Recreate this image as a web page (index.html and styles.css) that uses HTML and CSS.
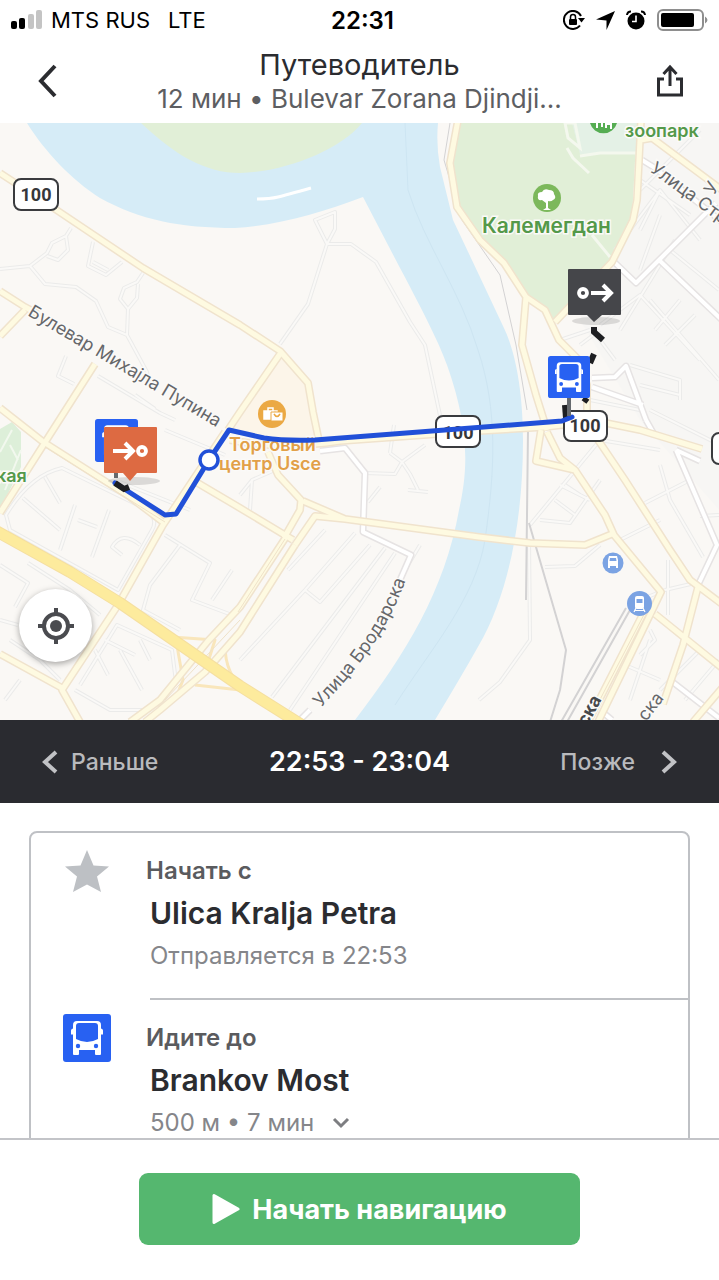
FILE: index.html
```html
<!DOCTYPE html>
<html lang="ru">
<head>
    <meta charset="UTF-8">
    <meta name="viewport" content="width=device-width, initial-scale=1.0">
    <title>Путеводитель</title>
    <link rel="stylesheet" href="styles.css">
</head>
<body>
    <div class="app">
        <div class="status">
            <div class="status-left">
                <svg width="32" height="20" viewBox="0 0 32 20">
                    <rect x="0" y="11" width="6" height="8" rx="2"/>
                    <rect x="8" y="8" width="6" height="11" rx="2"/>
                    <rect x="17" y="4" width="6" height="15" rx="2" fill="#c4c4c4"/>
                    <rect x="25" y="0" width="6" height="19" rx="2" fill="#c4c4c4"/>
                </svg>
                <span>MTS RUS</span>
                <span class="status-net">LTE</span>
            </div>
            <div class="status-time">22:31</div>
            <div class="status-right">
                <svg width="22" height="20" viewBox="0 0 22 20">
                    <path d="M18 6A9 9 0 1 0 17 15.500M19 10V8" fill="none" stroke="#000" stroke-width="2"/>
                    <path d="M15 8h7l-3.500 4.500z"/>
                    <rect x="6" y="9" width="8" height="6" rx="1"/>
                    <path d="M7.500 9V7a2.500 2.500 0 0 1 5 0v2" fill="none" stroke="#000" stroke-width="1.500"/>
                </svg>
                <svg width="19" height="19" viewBox="0 0 19 19"><path d="M19 0L10.500 19V9.500L0 8.500z"/></svg>
                <svg width="20" height="20" viewBox="0 0 20 20">
                    <circle cx="10" cy="11" r="8.500"/>
                    <path d="M1 5A4 4 0 0 1 5 1.500M19 5a4 4 0 0 0-4-3.500" fill="none" stroke="#000" stroke-width="2"/>
                    <path d="M10 5.500V11.500H6" fill="none" stroke="#fff" stroke-width="1.600"/>
                </svg>
                <svg width="51" height="22" viewBox="0 0 51 22">
                    <rect x="1" y="1" width="45" height="20" rx="5" fill="none" stroke="#8e8e8e" stroke-width="2"/>
                    <rect x="4" y="4" width="33" height="14" rx="2"/>
                    <path d="M48 7.500q5 3.500 0 7z" fill="#8e8e8e"/>
                </svg>
            </div>
        </div>

        <header class="header">
            <button class="icon-btn" aria-label="Назад">
                <svg width="20" height="34" viewBox="0 0 20 34"><path d="M18 2L4 17l14 15" fill="none" stroke="#2b2c30" stroke-width="4"/></svg>
            </button>
            <div class="titles">
                <h1>Путеводитель</h1>
                <p>12 мин • Bulevar Zorana Djindji...</p>
            </div>
            <button class="icon-btn" aria-label="Поделиться">
                <svg width="28" height="34" viewBox="0 0 28 34" fill="none" stroke="#2b2c30" stroke-width="3">
                    <path d="M8 15H2.500v16h23V15H20"/>
                    <path d="M14 22V4M7.500 10L14 3l6.500 7"/>
                </svg>
            </button>
        </header>

        <div class="map">
            <svg class="map-canvas" viewBox="0 123 719 597">
                <defs>
                    <symbol id="bus" viewBox="0 0 48 48">
                        <rect width="48" height="48" rx="3" fill="#2861f2"/>
                        <path d="M10 40V11q0-4 4-4h20q4 0 4 4v29q0 1-1 1h-4q-1 0-1-1v-4H16v4q0 1-1 1h-4q-1 0-1-1z" fill="#fff"/>
                        <path d="M13 12q0-3 3-3h16q3 0 3 3v13q-11 6-22 0z" fill="#2861f2"/>
                        <path d="M10 14.500q-2 .5-2 2v4h2M38 14.500q2 .5 2 2v4h-2" fill="#fff"/>
                        <circle cx="15" cy="32" r="2.200" fill="#2861f2"/>
                        <circle cx="33" cy="32" r="2.200" fill="#2861f2"/>
                    </symbol>
                    <!-- дороги рисуются дважды: контур и заливка -->
                    <g id="roads">
                        <path d="M0 173L58 211 143 268 240 325 280 351 308 383 313 412 319 441"/>
                        <path d="M0 291L25 307 38 314M25 310L0 336M280 354L240 412 228 430M225 432L163 525 118 605 62 690 80 722"/>
                        <path d="M95 364L58 422 0 513M0 408L42 441 130 497 163 522M62 688L0 654M196 482L240 508 293 540"/>
                        <path d="M284 538L300 510 301 500 278 475 268 452M303 501L345 519 479 537 530 543 585 545 612 534M295 545L315 516 345 519"/>
                        <path d="M286 537L240 607 208 641 160 700 130 722M295 545L240 632 205 672 160 710 145 722"/>
                        <path d="M230 440Q280 450 340 441L479 431 545 427 596 421 640 430 702 449"/>
                        <path d="M458 120L450 163 457 207 480 240 504 263 526 297 545 310 559 340 579 360 587 385 587 420M526 297L522 345 536 395 547 430"/>
                        <path d="M641 120L637 200 633 220 612 262 555 322M652 138L722 190M641 140L652 138"/>
                        <path d="M541 430L536 461 575 470M547 432L560 458 575 470 605 515 614 535 661 592 650 615 598 722M590 428L625 480 670 550 690 580 722 604"/>
                        <path d="M655 614L722 668M698 587L683 645 663 704M722 688L693 722M650 600L588 722"/>
                    </g>
                    <g id="lanes">
                        <path d="M320 451L345 448 365 473 363 532 411 555 400 580M310 710L298 722"/>
                        <path d="M676 450L717 545 699 583M646 420L626 366 615 377 592 378M592 387L643 405M646 420L655 436M700 461L676 450"/>
                        <path d="M612 260L636 283 659 260 716 203M659 260L722 320M642 160L655 168 722 222M670 680L719 718M600 710L612 720"/>
                    </g>
                    <g id="paths">
                        <path d="M0 269L30 266 47 253 52 243 66 236 71 228M66 236L68 250 58 260 47 256M30 266L45 284 76 287 96 301 108 327 127 335 147 372 148 380M127 335L128 309 120 299 124 288 137 282 143 273M128 309L137 298 138 284M93 242L88 266 106 275 122 262M93 262L108 270"/>
                        <path d="M66 356L58 376 74 384M98 376L160 413 175 420M135 395L155 409M327 244L315 220 335 212 335 229 327 244 351 244 376 262 410 322 425 345 441 420M327 244L308 304 280 344"/>
                        <path d="M6 515Q30 475 62 468L148 510Q158 520 152 530L118 590 10 530zM23 498L60 530M45 477L60 503M75 505L60 550M109 510L92 557M97 527L78 520M140 545q-18-15-28 2l10 8M120 482L190 510M165 430L225 455"/>
                        <path d="M165 535L210 563 192 600 232 615M180 545L150 585 143 610 180 630M232 570L212 600M0 565L28 583 15 607M28 563L70 590 100 615M0 620L18 625M10 640L40 660 60 680M5 700L20 680M80 685L117 625 172 650 176 682 150 710 110 710 75 690M95 650L108 675M105 640L135 655M120 650L142 690M140 640L150 660"/>
                        <path d="M240 495L252 480 275 470M252 480L250 510M325 530L288 570M355 533L305 590 240 660M305 590L320 602 370 545M385 548L272 697M395 553L290 710M365 473L395 474 402 462 390 453M402 462L410 474 418 490M402 462L425 445M368 502L380 487M420 545L405 570M408 490L428 492M394 425L390 453"/>
                        <path d="M479 700L500 682 530 640 529 540M545 567L575 566 600 545M530 525L600 440 660 450M540 520L570 523 600 480M560 485L590 500M555 500L575 515M565 485L580 495M660 465L670 500 703 557M645 503L690 480M620 540L660 520M665 590L695 583M668 560L668 615M640 655L655 640 650 630M625 665L660 680M650 640L630 700M665 590L640 600M700 650L660 690M719 660L685 700M700 516L719 515M650 410L720 445"/>
                        <path d="M615 250L660 190 700 240M640 190L700 130M660 215L640 270M675 240L620 330M600 325L640 295 700 360M650 300L719 380M655 330L680 300M665 345L695 315M630 365L680 380 680 400M600 340L615 360M590 400L640 410M640 180L690 215M660 170L690 140M670 250L719 290M590 330L560 340M580 345L600 330M640 385L680 395M660 190L640 230"/>
                    </g>
                </defs>

                <rect x="0" y="123" width="719" height="597" fill="#faf8f5"/>
                <path d="M638 120h90v400L640 420 580 320z" fill="#f7f6f4"/>
                <path d="M27 123C45 152 72 180 100 198C140 220 180 228 235 228C280 225 320 213 363 197L400 268C425 315 440 345 447 365C470 430 468 470 459 510C445 590 405 655 355 720H435C450 695 465 670 479 645C505 600 523 530 523 440C523 390 515 350 503 326L479 275L453 220L440 167Q436 145 438 123z" fill="#d6ecf7"/>
                <path d="M405 123L408 190C425 245 460 290 478 350C498 410 495 470 485 540C475 600 430 650 395 705" fill="none" stroke="#cde5f2"/>
                <path d="M141 123C175 155 205 173 240 173C285 172 340 150 362 123z" fill="#e1efd7"/>
                <path d="M257 199Q270 199 278 197T311 188" fill="none" stroke="#fff" stroke-width="3"/>
                <path d="M458 123L452 160 460 205 480 238 506 262 528 296 546 308 554 320 610 262 632 218 637 123z" fill="#e1efd7"/>
                <path d="M572 123L580 154 637 153V123z" fill="#e4f1e6"/>
                <path d="M565 123l3 15 12 10-5-25zM567 148l6 10 16 15M580 156L600 153H638M592 235L610 257" fill="none" stroke="#f4f8ee" stroke-width="3"/>
                <path d="M0 429l12-7 9 10v35L0 510z" fill="#ddefd9"/>
                <path d="M12 430L0 452M10 445L18 460M21 450L5 490" fill="none" stroke="#f2f8ee" stroke-width="2"/>
                <path d="M280 352L308 383 318 438 260 440 226 431z" fill="#fcf5e9"/>

                <use href="#paths" class="path-case"/>
                <use href="#paths" class="path-fill"/>
                <g class="rail">
                    <path d="M450 123L444 160 462 220 500 275 516 345 527 410"/>
                    <path d="M528 430L526 600M529 523L566 650 560 690 550 722" stroke-width="2"/>
                    <path d="M626 608L561 722M630 610L567 722" stroke-width="2"/>
                </g>
                <use href="#lanes" class="lane-case"/>
                <use href="#lanes" class="lane-fill"/>
                <g class="ramp">
                    <path d="M172 637L215 640 208 662M176 640L183 680 175 700M225 645Q225 675 245 690M195 685L240 690"/>
                </g>
                <use href="#roads" class="road-case"/>
                <use href="#roads" class="road-fill"/>
                <path d="M165 522L45 447M285 539L238 612M650 603L592 715M240 620L165 700" fill="none" stroke="#efe2c9" stroke-width="1"/>
                <path class="highway-case" d="M-4 531L70 572 120 603 240 686 302 725"/>
                <path class="highway" d="M-4 531L70 572 120 603 240 686 302 725"/>

                <g class="street">
                    <path id="street1" d="M27 315L228 434" fill="none"/>
                    <path id="street2" d="M321 708C350 675 387 640 411 565" fill="none"/>
                    <text><textPath href="#street1">Булевар Михајла Пупина</textPath></text>
                    <text><textPath href="#street2">Улица Бродарска</textPath></text>
                    <text transform="translate(649 171) rotate(36)">Улица Стр</text>
                    <text transform="translate(714 196) rotate(-60)">У</text>
                    <text transform="translate(646 722) rotate(-52)">ска</text>
                    <text transform="translate(587 727) rotate(-62)" class="street-bold">ска</text>
                </g>

                <g class="place green">
                    <text x="482" y="233">Калемегдан</text>
                    <text x="625" y="137" class="place-small">зоопарк</text>
                    <text x="-4" y="482" class="place-small">кая</text>
                </g>
                <circle cx="547" cy="198" r="14" fill="#7cb85b"/>
                <path d="M546 208v-5l-4-3q-5 1-4-4-1-4 4-4 2-4 7-2 5 0 5 4 3 4-1 6-2 2-5 1v7l3 2h-8z" fill="#fff"/>
                <path d="M590 123a14 14 0 0 0 27 0z" fill="#55ad52"/>
                <path d="M597 123v5M602 123v4M606 128v-4h5v5" stroke="#fff" stroke-width="2" fill="none"/>

                <circle cx="272" cy="414" r="14" fill="#eba944"/>
                <path d="M264 411h13v8h-13zM268 411v-3h5v3" fill="none" stroke="#fff" stroke-width="1.500"/>
                <path d="M264 411h10v8h-10z" fill="#fff"/>
                <path d="M271 412h12v9h-12z" fill="#fff" stroke="#eba944"/>
                <path d="M274 414q3 5 6 0" fill="none" stroke="#eba944" stroke-width="1.500"/>
                <g class="place orange">
                    <text x="229" y="451">Торговый</text>
                    <text x="219" y="470">центр Usce</text>
                </g>

                <g class="shield">
                    <rect x="14" y="179" width="44" height="31" rx="7"/><text x="36" y="201">100</text>
                    <rect x="436" y="416" width="44" height="31" rx="7"/><text x="458" y="439">100</text>
                    <rect x="564" y="411" width="43" height="30" rx="7"/><text x="585" y="432">100</text>
                    <rect x="712" y="433" width="44" height="31" rx="7"/>
                </g>

                <g>
                    <circle cx="613" cy="563" r="10.500" fill="#7ba3e3"/>
                    <path d="M608 560l1-4h8l1 4v8h-2v-2h-6v2h-2z" fill="#fff"/>
                    <path d="M609.500 561l.5-3h6l.5 3z" fill="#7ba3e3"/>
                    <circle cx="639.500" cy="603.500" r="12.500" fill="#7ba3e3"/>
                    <rect x="635" y="596" width="9" height="13" rx="2" fill="#fff"/>
                    <path d="M636.500 599h6v4h-6z" fill="#7ba3e3"/>
                    <path d="M636 608l-2 4M643 608l2 4M635 610.500h9" stroke="#fff" stroke-width="1.200"/>
                </g>

                <!-- маршрут -->
                <ellipse cx="596" cy="321" rx="24" ry="4" fill="#000" opacity=".12"/>
                <ellipse cx="134" cy="481" rx="26" ry="4" fill="#000" opacity=".12"/>
                <path d="M587 398l-3 4" class="walk"/>
                <path d="M594 327v5l9 8" class="walk"/>
                <path d="M594 354l-4 9" class="walk"/>
                <path d="M565 405l1 13" class="walk"/>
                <path class="route" d="M115 483L165 515 176 514 209 460 229 430 264 438Q285 441 315 440L562 421 572 417"/>
                <path d="M115 483l9 6 5-2" class="walk"/>
                <path d="M569 398v18M116 462v16" stroke="#666a6e" stroke-width="4"/>
                <circle cx="209" cy="460" r="9" fill="#fff" stroke="#2150d8" stroke-width="3.500"/>

                <use href="#bus" x="95" y="419" width="43" height="43"/>
                <use href="#bus" x="548" y="356" width="42" height="42"/>
                <path d="M105 427h51q1 0 1 1v44q0 1-1 1h-19l-7 8-7-8h-18q-1 0-1-1v-44q0-1 1-1z" fill="#dd6a42"/>
                <path d="M113 451h18M125 443l8 8-8 8" fill="none" stroke="#fff" stroke-width="4"/>
                <circle cx="142" cy="451" r="4" fill="none" stroke="#fff" stroke-width="3.800"/>
                <path d="M569 269h51q1 0 1 1v44q0 1-1 1h-18l-8 7-7-7h-18q-1 0-1-1v-44q0-1 1-1z" fill="#45464a"/>
                <circle cx="583" cy="293" r="4" fill="none" stroke="#fff" stroke-width="3.800"/>
                <path d="M591 293h18M603 285l8 8-8 8" fill="none" stroke="#fff" stroke-width="4"/>
            </svg>
            <button class="locate" aria-label="Моё местоположение">
                <svg width="36" height="36" viewBox="0 0 36 36">
                    <circle cx="18" cy="18" r="12" fill="none" stroke="#4a4b4f" stroke-width="4"/>
                    <circle cx="18" cy="18" r="6" fill="#4a4b4f"/>
                    <path d="M18 0v7M18 29v7M0 18h7M29 18h7" stroke="#4a4b4f" stroke-width="4"/>
                </svg>
            </button>
        </div>

        <nav class="times">
            <button class="time-btn">
                <svg width="16" height="24" viewBox="0 0 16 24"><path d="M14 2L3 12l11 10" fill="none" stroke="#c1c2c5" stroke-width="4"/></svg>
                Раньше
            </button>
            <strong class="time-range">22:53 - 23:04</strong>
            <button class="time-btn time-later">
                Позже
                <svg width="16" height="24" viewBox="0 0 16 24"><path d="M2 2l11 10L2 22" fill="none" stroke="#c1c2c5" stroke-width="4"/></svg>
            </button>
        </nav>

        <main class="steps">
            <ol class="card">
                <li class="step">
                    <div class="step-icon">
                        <svg width="44" height="42" viewBox="0 0 44 42"><path d="M22 0l6.500 15.500L44 16.500 32 26.500 36 42 22 34.500 8 42l4-15.500L0 16.500l15.500-1z" fill="#bdc0c4"/></svg>
                    </div>
                    <div class="step-body">
                        <p class="step-label">Начать с</p>
                        <h2>Ulica Kralja Petra</h2>
                        <p class="step-info">Отправляется в 22:53</p>
                    </div>
                </li>
                <li class="step">
                    <div class="step-icon">
                        <svg width="48" height="48"><use href="#bus"/></svg>
                    </div>
                    <div class="step-body">
                        <p class="step-label">Идите до</p>
                        <h2>Brankov Most</h2>
                        <button class="step-info">500 м • 7 мин
                            <svg width="18" height="12" viewBox="0 0 18 12"><path d="M2 2l7 7 7-7" fill="none" stroke="#7d7e81" stroke-width="3"/></svg>
                        </button>
                    </div>
                </li>
            </ol>
        </main>

        <footer class="footer">
            <button class="start">
                <svg width="28" height="32" viewBox="0 0 28 32"><path d="M2 2.500v27L26 16z" fill="#fff" stroke="#fff" stroke-width="3" stroke-linejoin="round"/></svg>
                Начать навигацию
            </button>
        </footer>
    </div>
</body>
</html>
```
FILE: styles.css
```css
*{
    box-sizing: border-box;
}
body{
    margin: 0;
    background: #fff;
    color: #2b2c30;
    font-family: Inter, "Noto Sans", sans-serif;
}
h1, h2, p, ol{
    margin: 0;
    padding: 0;
    font-weight: 400;
}
button{
    margin: 0;
    padding: 0;
    border: 0;
    background: none;
    color: inherit;
    font: inherit;
}
svg{
    display: block;
    flex: none;
}
.app{
    display: flex;
    flex-direction: column;
    height: 100vh;
}

/* status bar */
.status{
    display: grid;
    grid-template-columns: 1fr auto 1fr;
    align-items: center;
    height: 40px;
    padding: 0 11px;
    color: #000;
    font-size: 22px;
}
.status-left, .status-right{
    display: flex;
    align-items: center;
    gap: 8px;
}
.status-net{
    margin-left: 10px;
}
.status-time{
    padding-left: 6px;
    font-size: 24px;
    font-weight: 600;
}
.status-right{
    justify-content: flex-end;
    gap: 11px;
}

/* header */
.header{
    display: grid;
    grid-template-columns: 96px 1fr 96px;
    align-items: center;
    height: 83px;
}
.icon-btn{
    display: flex;
    justify-content: center;
    padding: 0 2px 2px 0;
}
.titles{
    text-align: center;
    line-height: 34px;
}
.titles h1{
    font-size: 29px;
}
.titles p{
    font-size: 26px;
    color: #5d5e62;
}

/* map */
.map{
    position: relative;
    flex: none;
    overflow: hidden;
}
.map-canvas{
    width: 100%;
    height: auto;
}
.path-case, .path-fill, .lane-case, .lane-fill, .road-case, .road-fill, .highway, .highway-case, .rail, .ramp{
    fill: none;
    stroke-linejoin: round;
}
.path-case{
    stroke: #ebebea;
    stroke-width: 4px;
}
.path-fill{
    stroke: #faf9f7;
    stroke-width: 2px;
}
.lane-case{
    stroke: #e6e3e3;
    stroke-width: 7px;
}
.lane-fill{
    stroke: #fff;
    stroke-width: 4px;
}
.road-case{
    stroke: #f0e3cd;
    stroke-width: 8px;
}
.road-fill{
    stroke: #fefae1;
    stroke-width: 5px;
}
.highway-case{
    stroke: #f5dfa0;
    stroke-width: 12px;
}
.highway{
    stroke: #fdeb9d;
    stroke-width: 10px;
}
.rail{
    stroke: #d3d2d3;
    stroke-width: 1px;
}
.ramp{
    stroke: #f9e6bb;
    stroke-width: 3px;
}
.route{
    fill: none;
    stroke: #2150d8;
    stroke-width: 5px;
    stroke-linejoin: round;
    stroke-linecap: round;
}
.walk{
    fill: none;
    stroke: #1e1f22;
    stroke-width: 6px;
}
.street text, .place text{
    paint-order: stroke;
    stroke: #fbfaf8;
    stroke-width: 3px;
}
.street{
    fill: #66676a;
    font-size: 18px;
}
.street-bold{
    fill: #47484b;
    font-weight: 700;
}
.place{
    font-size: 21px;
    font-weight: 600;
}
.place-small, .orange{
    font-size: 18px;
}
.green{
    fill: #54994a;
}
.orange{
    fill: #e2a048;
}
.shield rect{
    fill: #fff;
    stroke: #3a3b3e;
    stroke-width: 2px;
}
.shield text{
    fill: #36373a;
    font-family: Roboto, sans-serif;
    font-size: 18px;
    font-weight: 700;
    text-anchor: middle;
}
.locate{
    position: absolute;
    left: 19px;
    bottom: 58px;
    display: flex;
    align-items: center;
    justify-content: center;
    width: 73px;
    height: 73px;
    border-radius: 50%;
    background: #fff;
    box-shadow: 0 2px 6px rgba(0, 0, 0, .35);
}

/* departure times */
.times{
    display: grid;
    grid-template-columns: 1fr auto 1fr;
    align-items: center;
    flex: none;
    height: 83px;
    padding: 0 42px;
    background: #2a2b30;
    color: #fff;
}
.time-btn{
    display: flex;
    align-items: center;
    gap: 13px;
    color: #b9babd;
    font-size: 23px;
    font-weight: 500;
}
.time-later{
    justify-content: flex-end;
    gap: 26px;
}
.time-range{
    font-size: 27px;
    font-weight: 600;
}

/* route steps */
.steps{
    flex: 1;
    min-height: 0;
    overflow-y: auto;
    scrollbar-width: none;
    padding: 28px 29px;
}
.card{
    list-style: none;
    border: 2px solid #bfc1c5;
    border-radius: 8px;
}
.step{
    display: grid;
    grid-template-columns: 112px 1fr;
}
.step-icon{
    display: flex;
    align-items: center;
    justify-content: center;
    height: 76px;
}
.step-body{
    margin-left: 7px;
    padding: 21px 0 24px;
    border-bottom: 2px solid #bfc1c5;
}
.step:last-child .step-body{
    border-bottom: 0;
}
.step-label{
    margin-left: -4px;
    color: #5a5b5e;
    font-size: 24px;
    font-weight: 600;
    line-height: 34px;
}
.step h2{
    font-size: 30px;
    font-weight: 600;
    line-height: 50px;
}
.step-info{
    display: flex;
    align-items: center;
    gap: 18px;
    color: #85868a;
    font-size: 24px;
    line-height: 36px;
}

/* bottom bar */
.footer{
    display: flex;
    justify-content: center;
    flex: none;
    padding: 33px 24px 35px;
    border-top: 2px solid #c3c4c8;
    background: #fff;
}
.start{
    display: flex;
    align-items: center;
    justify-content: center;
    gap: 12px;
    width: 441px;
    max-width: 100%;
    height: 72px;
    border-radius: 9px;
    background: #55b76f;
    color: #fff;
    font-size: 27px;
    font-weight: 700;
}
```
